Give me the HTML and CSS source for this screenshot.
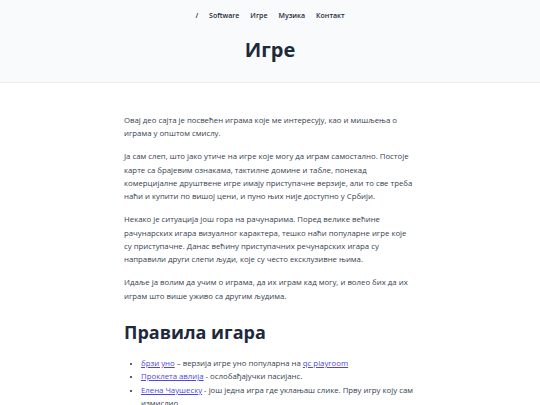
FILE: index.html
```html
<!DOCTYPE html>
<html lang="sr">
<head>
<meta charset="utf-8">
<title>Игре</title>
<link rel="stylesheet" href="styles.css">
</head>
<body>
<header class="site-header">
  <nav class="nav">
    <a href="#">/</a>
    <a href="#">Software</a>
    <a href="#">Игре</a>
    <a href="#">Музика</a>
    <a href="#">Контакт</a>
  </nav>
  <h1 class="title">Игре</h1>
</header>
<main class="content">
  <p>Овај део сајта је посвећен играма које ме интересују, као и мишљења о играма у општом смислу.</p>
  <p>Ја сам слеп, што јако утиче на игре које могу да играм самостално. Постоје карте са брајевим ознакама, тактилне домине и табле, понекад комерцијалне друштвене игре имају приступачне верзије, али то све треба наћи и купити по вишој цени, и пуно њих није доступно у Србији.</p>
  <p>Некако је ситуација још гора на рачунарима. Поред велике већине рачунарских игара визуалног карактера, тешко наћи популарне игре које су приступачне. Данас већину приступачних речунарских игара су направили други слепи људи, које су често ексклузивне њима.</p>
  <p>Идаље ја волим да учим о играма, да их играм кад могу, и волео бих да их играм што више уживо са другим људима.</p>
  <h2 class="section">Правила игара</h2>
  <ul class="list">
    <li><a href="#">брзи уно</a> – верзија игре уно популарна на <a href="#">qc playroom</a></li>
    <li><a href="#">Проклета авлија</a> - ослобађајучки пасијанс.</li>
    <li><a href="#">Елена Чаушеску</a> - још једна игра где уклањаш слике. Прву игру коју сам измислио.</li>
  </ul>
</main>
</body>
</html>
```
FILE: styles.css
```css
html, body {
  margin: 0;
  padding: 0;
  background: #ffffff;
}
body {
  font-family: "Open Sans", "Noto Sans", sans-serif;
  color: #374151;
}
.site-header {
  background: #f8fafc;
  border-bottom: 1px solid #e9edf2;
  height: 83px;
  box-sizing: border-box;
  display: flex;
  flex-direction: column;
  align-items: center;
}
.nav {
  display: flex;
  gap: 11px;
  margin-top: 10px;
  font-size: 7px;
  font-weight: 600;
  line-height: 12px;
}
.nav a {
  color: #1e293b;
  text-decoration: none;
}
.title {
  margin: 14px 0 0;
  font-size: 20px;
  line-height: 28px;
  font-weight: 700;
  color: #1e293b;
}
.content {
  width: 292px;
  margin: 0 auto;
  padding-top: 31px;
  font-size: 7.8px;
  line-height: 13.35px;
}
.content p {
  margin: 0 0 9.6px;
}
.section {
  margin: 17px 0 13px;
  font-size: 18px;
  line-height: 24px;
  font-weight: 700;
  color: #1e293b;
}
.list {
  margin: 0;
  padding-left: 17px;
}
.list li::marker {
  font-size: 6px;
  color: #1e293b;
}
.content a {
  color: #4f46e5;
}
```
